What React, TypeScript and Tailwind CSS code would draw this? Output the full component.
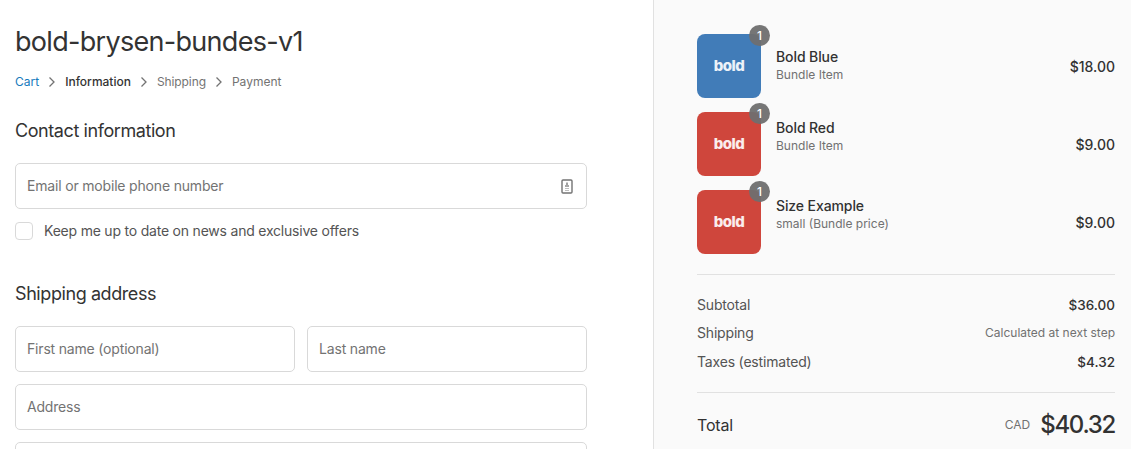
const sans = "font-['Inter',sans-serif]"

type Item = { nome: string; sub: string; preco: string; cor: string; alto?: boolean }

const itens: Item[] = [
  { nome: "Bold Blue", sub: "Bundle Item", preco: "$18.00", cor: "bg-[#417cb8]" },
  { nome: "Bold Red", sub: "Bundle Item", preco: "$9.00", cor: "bg-[#cf463c]", alto: true },
  { nome: "Size Example", sub: "small (Bundle price)", preco: "$9.00", cor: "bg-[#cf463c]", alto: true },
]

function Campo({ texto, className = "" }: { texto: string; className?: string }) {
  return (
    <div className={`h-[46px] flex items-center justify-between px-[11px] pb-[2px] border border-[#d9d9d9] rounded-[5px] bg-white text-[14px] tracking-[-0.18px] text-[#737373] ${className}`}>
      <span>{texto}</span>
    </div>
  )
}

function Seta() {
  return (
    <svg width="10" height="10" viewBox="0 0 10 10" fill="none" stroke="#737373" strokeWidth="1.3" className="mx-[8px]">
      <path d="M2.5 0.5 L7 5 L2.5 9.5" />
    </svg>
  )
}

function Produto({ item }: { item: Item }) {
  return (
    <div className="flex items-center">
      <div className={`relative w-[64px] h-[64px] rounded-[8px] flex items-center justify-center ${item.cor}`}>
        <span className="font-extrabold text-[15px] text-white/90 tracking-[-0.5px]">bold</span>
        <span className="absolute -top-[9px] -right-[9px] w-[21px] h-[21px] rounded-full bg-[#6f6f6f]/95 text-white text-[12px] font-medium flex items-center justify-center">1</span>
      </div>
      <div className={`ml-[15px] flex-1 ${item.alto ? "mb-[14px]" : ""}`}>
        <div className="text-[14px] leading-[18px] font-medium tracking-[-0.1px] text-[#323232]">{item.nome}</div>
        <div className="text-[12px] leading-[18px] text-[#717171]">{item.sub}</div>
      </div>
      <div className="text-[14px] font-medium text-[#323232]">{item.preco}</div>
    </div>
  )
}

export default function App() {
  return (
    <div className={`h-[449px] w-[1131px] overflow-hidden flex bg-white text-[#333333] ${sans}`}>
      {/* Coluna do formulario */}
      <div className="w-[653px] shrink-0 pl-[15px] pr-[66px] pt-[24px]">
        <h1 className="text-[27px] leading-[36px] tracking-[-0.7px] text-[#333333]">bold-brysen-bundes-v1</h1>
        <nav className="mt-[14px] flex items-center text-[12px] leading-[16px]">
          <span className="text-[#197bbd]">Cart</span>
          <Seta />
          <span className="text-[#333333] font-medium">Information</span>
          <Seta />
          <span className="text-[#737373] tracking-[-0.1px]">Shipping</span>
          <Seta />
          <span className="text-[#737373]">Payment</span>
        </nav>

        <h2 className="mt-[29px] text-[18px] leading-[24px] tracking-[-0.42px] text-[#333333]">Contact information</h2>
        <div className="mt-[20px] h-[46px] flex items-center justify-between pl-[11px] pr-[13px] border border-[#d9d9d9] rounded-[5px] text-[14px] tracking-[-0.18px] text-[#737373]">
          <span className="pb-[2px]">Email or mobile phone number</span>
          <svg width="12" height="15" viewBox="0 0 12 15" fill="none">
            <rect x="1" y="1" width="10" height="13" rx="1" stroke="#737373" strokeWidth="1.4" />
            <path d="M6 3.5 L6 6 M4 7 H8" stroke="#8a8a8a" strokeWidth="1.6" />
            <path d="M4 9.5 H8 M4 11.5 H8" stroke="#bdbdbd" strokeWidth="1.2" />
          </svg>
        </div>
        <label className="mt-[13px] flex items-center">
          <span className="w-[18px] h-[18px] border border-[#d9d9d9] rounded-[4px] bg-white" />
          <span className="ml-[11px] text-[14px] leading-[18px] tracking-[-0.21px] text-[#545454]">Keep me up to date on news and exclusive offers</span>
        </label>

        <h2 className="mt-[42px] text-[18px] leading-[24px] tracking-[-0.42px] text-[#333333]">Shipping address</h2>
        <div className="mt-[20px] flex gap-[12px]">
          <Campo texto="First name (optional)" className="flex-1" />
          <Campo texto="Last name" className="flex-1" />
        </div>
        <Campo texto="Address" className="mt-[12px]" />
        <Campo texto="" className="mt-[12px]" />
      </div>

      {/* Resumo do pedido */}
      <div className="flex-1 bg-[#fafafa] border-l border-[#e1e1e1] pl-[43px] pr-[16px] pt-[34px]">
        <div className="flex flex-col gap-[14px]">
          {itens.map((item) => (
            <Produto key={item.nome} item={item} />
          ))}
        </div>
        <div className="mt-[20px] border-t border-[#e1e1e1] pt-[20px] pb-[20px] flex flex-col gap-[8px] text-[14px] leading-[20px] tracking-[-0.18px] text-[#545454]">
          <div className="flex items-center justify-between">
            <span>Subtotal</span>
            <span className="font-medium text-[#323232] text-[13.5px] tracking-normal">$36.00</span>
          </div>
          <div className="flex items-center justify-between">
            <span>Shipping</span>
            <span className="text-[12px] tracking-normal text-[#717171]">Calculated at next step</span>
          </div>
          <div className="mt-[1px] flex items-center justify-between">
            <span>Taxes (estimated)</span>
            <span className="font-medium text-[#323232] text-[13.5px] tracking-normal">$4.32</span>
          </div>
        </div>
        <div className="border-t border-[#e1e1e1] pt-[16px] flex items-center justify-between">
          <span className="text-[16px] tracking-[-0.2px] text-[#323232]">Total</span>
          <span className="flex items-center">
            <span className="text-[12px] text-[#717171] mr-[10px]">CAD</span>
            <span className="text-[24px] leading-[32px] font-medium tracking-[-1.3px] text-[#323232]">$40.32</span>
          </span>
        </div>
      </div>
    </div>
  )
}
